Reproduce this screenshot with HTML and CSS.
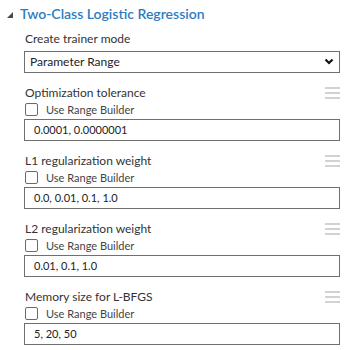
FILE: index.html
```html
<!DOCTYPE html>
<html lang="en">
<head>
    <meta charset="UTF-8">
    <meta name="viewport" content="width=device-width, initial-scale=1.0">
    <title>Two-Class Logistic Regression</title>
    <link rel="stylesheet" href="styles.css">
</head>
<body>
    <div class="panel">
        <div class="panel-header">
            <svg class="caret" viewBox="0 0 6 6" width="6" height="6">
                <polygon points="6,0 6,6 0,6" fill="#4a4a4a" />
            </svg>
            <span class="panel-title">Two-Class Logistic Regression</span>
        </div>

        <div class="panel-body">
            <div class="field field-mode">
                <label class="field-label" for="mode">Create trainer mode</label>
                <div class="select-wrap">
                    <select id="mode">
                        <option>Parameter Range</option>
                        <option>Single Parameter</option>
                    </select>
                    <svg class="select-arrow" viewBox="0 0 10 7" width="10" height="7">
                        <path d="M1.5 1.5 L5 5 L8.5 1.5" fill="none" stroke="#111" stroke-width="2.2" />
                    </svg>
                </div>
            </div>

            <div class="field">
                <div class="field-head">
                    <label class="field-label" for="tol">Optimization tolerance</label>
                    <span class="drag-handle"><i></i><i></i><i></i></span>
                </div>
                <label class="range-check"><input type="checkbox"> Use Range Builder</label>
                <input class="text-input" type="text" id="tol" value="0.0001, 0.0000001">
            </div>

            <div class="field">
                <div class="field-head">
                    <label class="field-label" for="l1">L1 regularization weight</label>
                    <span class="drag-handle"><i></i><i></i><i></i></span>
                </div>
                <label class="range-check"><input type="checkbox"> Use Range Builder</label>
                <input class="text-input" type="text" id="l1" value="0.0, 0.01, 0.1, 1.0">
            </div>

            <div class="field">
                <div class="field-head">
                    <label class="field-label" for="l2">L2 regularization weight</label>
                    <span class="drag-handle"><i></i><i></i><i></i></span>
                </div>
                <label class="range-check"><input type="checkbox"> Use Range Builder</label>
                <input class="text-input" type="text" id="l2" value="0.01, 0.1, 1.0">
            </div>

            <div class="field">
                <div class="field-head">
                    <label class="field-label" for="mem">Memory size for L-BFGS</label>
                    <span class="drag-handle"><i></i><i></i><i></i></span>
                </div>
                <label class="range-check"><input type="checkbox"> Use Range Builder</label>
                <input class="text-input" type="text" id="mem" value="5, 20, 50">
            </div>
        </div>
    </div>
</body>
</html>
```

FILE: styles.css
```css
body {
    margin: 0;
    background: #fff;
    font-family: "Lato", "Noto Sans", sans-serif;
    color: #333;
}

.panel {
    width: 352px;
}

.panel-header {
    display: flex;
    align-items: center;
    height: 26px;
    padding-left: 7px;
}

.caret {
    margin-right: 7px;
    margin-top: 4px;
}

.panel-title {
    font-size: 14px;
    font-weight: 600;
    color: #2d7cc1;
}

.panel-body {
    padding: 0 12px 0 24px;
}

.field {
    margin-top: 12px;
}

.field-mode {
    margin-top: 5px;
}

.field-mode .field-label {
    display: block;
    height: 16px;
    line-height: 16px;
    margin-bottom: 3px;
}

.field-head {
    display: flex;
    justify-content: space-between;
    align-items: center;
    height: 16px;
}

.field-label {
    font-size: 12px;
    padding-left: 1px;
}

.drag-handle {
    display: flex;
    flex-direction: column;
    gap: 3px;
    width: 15px;
}

.drag-handle i {
    display: block;
    height: 2px;
    background: #d2d2d2;
}

.select-wrap {
    position: relative;
}

select {
    appearance: none;
    -webkit-appearance: none;
    width: 100%;
    height: 22px;
    margin: 0;
    padding: 0 0 0 5px;
    border: 1px solid #707070;
    border-radius: 0;
    background: #fff;
    font-family: inherit;
    font-size: 12px;
    color: #222;
}

.select-arrow {
    position: absolute;
    right: 6px;
    top: 8px;
}

.range-check {
    display: flex;
    align-items: center;
    height: 18px;
    font-size: 11px;
    color: #444;
}

.range-check input {
    appearance: none;
    -webkit-appearance: none;
    width: 13px;
    height: 13px;
    margin: 0 8px 0 1px;
    border: 1px solid #6a6a6a;
    border-radius: 2px;
    background: #fff;
}

.text-input {
    display: block;
    box-sizing: border-box;
    width: 100%;
    height: 22px;
    margin: 0;
    padding: 0 0 0 9px;
    border: 1px solid #707070;
    border-radius: 0;
    font-family: inherit;
    font-size: 11px;
    color: #222;
    outline: none;
}
```
